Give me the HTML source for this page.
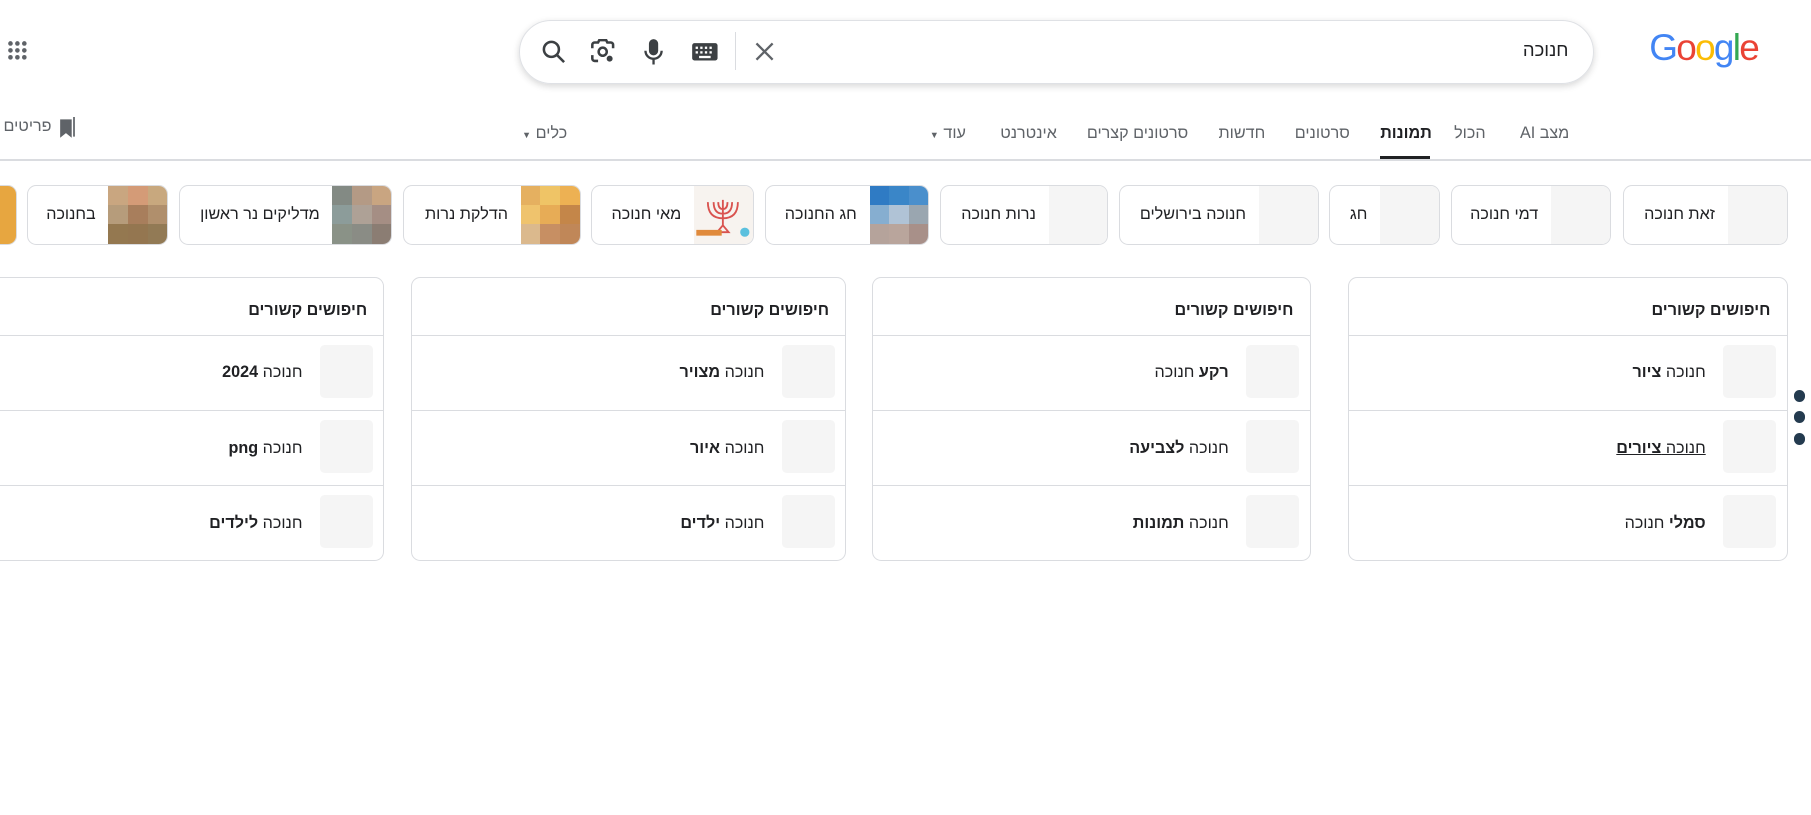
<!DOCTYPE html>
<html><head><meta charset="utf-8"><style>
html,body{margin:0;padding:0;background:#fff;overflow:hidden;width:1811px;height:815px}
#w{position:relative;width:1568px;height:706px;zoom:1.15497;font-family:"Liberation Sans","Noto Sans CJK SC",sans-serif;color:#202124}
.a{position:absolute}
.search{left:449px;top:17px;width:929px;height:54px;border:1px solid #dfe1e5;border-radius:28px;box-shadow:0 2px 6px rgba(32,33,36,.18)}
.tab{position:absolute;top:107px;font-size:14px;color:#5f6368;white-space:nowrap;direction:rtl}
.chip{position:absolute;top:160px;height:50px;border:1px solid #dadce0;border-radius:8px;overflow:hidden;background:#fff}
.chip .t{position:absolute;top:17px;font-size:14px;color:#202124;white-space:nowrap;direction:rtl}
.chip .im{position:absolute;right:0;top:0;width:51px;height:50px;background:#f5f5f5}
.card{position:absolute;top:240px;height:244px;border:1px solid #dadce0;border-radius:8px;background:#fff}
.card .h{position:absolute;right:14px;top:20px;font-size:14px;font-weight:bold;direction:rtl}
.row{position:absolute;left:0;right:0;height:64px;border-top:1px solid #dadce0}
.row .th{position:absolute;right:9px;top:8px;width:46px;height:46px;background:#f5f5f5;border-radius:4px}
.row .x{position:absolute;right:70px;top:24px;font-size:14px;direction:rtl;white-space:nowrap}
.row b{font-weight:bold}
.mos{position:absolute;right:0;top:0;width:51px;height:50px;display:grid;grid-template-columns:repeat(3,1fr);grid-template-rows:repeat(3,1fr)}
</style></head><body><div id="w">
<svg class="a" style="left:6px;top:35px" width="18" height="18" viewBox="0 0 18 18" fill="#5f6368"><circle cx="3" cy="3" r="2"/><circle cx="9" cy="3" r="2"/><circle cx="15" cy="3" r="2"/><circle cx="3" cy="9" r="2"/><circle cx="9" cy="9" r="2"/><circle cx="15" cy="9" r="2"/><circle cx="3" cy="15" r="2"/><circle cx="9" cy="15" r="2"/><circle cx="15" cy="15" r="2"/></svg>
<div class="a search"></div>
<div class="a" style="right:210px;top:34px;font-size:16px;">חנוכה</div>
<svg class="a" style="left:652px;top:35px" width="20" height="20" viewBox="0 0 20 20"><path d="M3 3L17 17M17 3L3 17" stroke="#5f6368" stroke-width="2"/></svg>
<div class="a" style="left:636px;top:28px;width:1px;height:33px;background:#dadce0"></div>
<svg class="a" style="left:598px;top:36px" width="24" height="18" viewBox="0 0 24 18"><rect x="1" y="1" width="22" height="15" rx="2" fill="#3c4043"/><g fill="#fff"><rect x="4" y="4" width="2" height="2"/><rect x="8" y="4" width="2" height="2"/><rect x="12" y="4" width="2" height="2"/><rect x="16" y="4" width="2" height="2"/><rect x="4" y="8" width="2" height="2"/><rect x="8" y="8" width="2" height="2"/><rect x="12" y="8" width="2" height="2"/><rect x="16" y="8" width="2" height="2"/><rect x="7" y="12" width="10" height="2"/></g></svg>
<svg class="a" style="left:556px;top:33px" width="20" height="24" viewBox="0 0 20 24"><rect x="6" y="1" width="8" height="14" rx="4" fill="#3c4043"/><path d="M3 11a7 7 0 0 0 14 0M10 18v5" stroke="#3c4043" stroke-width="2" fill="none"/></svg>
<svg class="a" style="left:511px;top:34px" width="22" height="22" viewBox="0 0 22 22" fill="none" stroke="#3c4043" stroke-width="2.2"><path d="M2 8V5a2 2 0 0 1 2-2h3l1-2h6l1 2h3a2 2 0 0 1 2 2v3M2 14v3a2 2 0 0 0 2 2h3"/><circle cx="11" cy="11" r="3.5"/><circle cx="17" cy="17" r="1.5" fill="#3c4043"/></svg>
<svg class="a" style="left:468px;top:34px" width="22" height="22" viewBox="0 0 22 22" fill="none" stroke="#3c4043" stroke-width="2.2"><circle cx="9" cy="9" r="6.5"/><path d="M14 14l6 6"/></svg>
<div class="a" style="left:1428px;top:23px;font-size:32px;letter-spacing:-1.5px;font-family:'Liberation Sans',sans-serif"><span style="color:#4285f4">G</span><span style="color:#ea4335">o</span><span style="color:#fbbc05">o</span><span style="color:#4285f4">g</span><span style="color:#34a853">l</span><span style="color:#ea4335">e</span></div>
<div class="tab" style="left:1316px">מצב AI</div>
<div class="tab" style="left:1259px">הכול</div>
<div class="tab" style="left:1195px;color:#202124;font-weight:bold">תמונות</div>
<div class="a" style="left:1195px;top:135px;width:43px;height:3px;background:#202124"></div>
<div class="tab" style="left:1121px">סרטונים</div>
<div class="tab" style="left:1055px">חדשות</div>
<div class="tab" style="left:941px">סרטונים קצרים</div>
<div class="tab" style="left:866px">אינטרנט</div>
<div class="tab" style="left:805px;direction:ltr"><span style="font-size:8px">▼</span> עוד</div>
<div class="tab" style="left:452px;direction:ltr"><span style="font-size:8px">▼</span> כלים</div>
<div class="tab" style="left:3px;top:101px">פריטים</div>
<svg class="a" style="left:51px;top:101px" width="15" height="19" viewBox="0 0 15 19"><path d="M1 2h10v16l-5-4-5 4z" fill="#5f6368"/><path d="M13 0v17" stroke="#5f6368" stroke-width="1.5"/></svg>
<div class="a" style="left:0;top:138px;width:1568px;height:1px;background:#dadce0"></div>
<div class="chip" style="left:1405px;width:141px"><div class="im"></div><div class="t" style="right:62px">זאת חנוכה</div></div>
<div class="chip" style="left:1256px;width:137px"><div class="im"></div><div class="t" style="right:62px">דמי חנוכה</div></div>
<div class="chip" style="left:1151px;width:94px"><div class="im"></div><div class="t" style="right:62px">חג</div></div>
<div class="chip" style="left:969px;width:171px"><div class="im"></div><div class="t" style="right:62px">חנוכה בירושלים</div></div>
<div class="chip" style="left:814px;width:144px"><div class="im"></div><div class="t" style="right:62px">נרות חנוכה</div></div>
<div class="chip" style="left:662px;width:141px"><div class="mos"><i style="background:#2f7bc4"></i><i style="background:#3a86c8"></i><i style="background:#4a8fcc"></i><i style="background:#86aed0"></i><i style="background:#b0c3d6"></i><i style="background:#9aa6b0"></i><i style="background:#b5a39b"></i><i style="background:#b9a59c"></i><i style="background:#a89089"></i></div><div class="t" style="right:62px">חג החנוכה</div></div>
<div class="chip" style="left:512px;width:139px"><div class="im" style="background:#f7f3ef"><svg width="51" height="50" viewBox="0 0 51 50"><path d="M25 12v22M12 14q0 14 13 14q13 0 13-14M17 14q0 10 8 10q8 0 8-10M21 14q0 6 4 6q4 0 4-6M20 40h10l-5-6z" stroke="#d9534f" stroke-width="1.6" fill="none"/><rect x="2" y="38" width="22" height="5" fill="#e08a3c"/><circle cx="44" cy="40" r="4" fill="#5bc0de"/></svg></div><div class="t" style="right:62px">מאי חנוכה</div></div>
<div class="chip" style="left:349px;width:152px"><div class="mos"><i style="background:#e5b060"></i><i style="background:#efc466"></i><i style="background:#edb153"></i><i style="background:#efc36d"></i><i style="background:#e7ac56"></i><i style="background:#c48649"></i><i style="background:#dbb98d"></i><i style="background:#c78f63"></i><i style="background:#c08758"></i></div><div class="t" style="right:62px">הדלקת נרות</div></div>
<div class="chip" style="left:155px;width:183px"><div class="mos"><i style="background:#838a84"></i><i style="background:#b49a85"></i><i style="background:#c9a581"></i><i style="background:#8c9c9a"></i><i style="background:#aea196"></i><i style="background:#a58e84"></i><i style="background:#8a9287"></i><i style="background:#8a8c85"></i><i style="background:#8b7d73"></i></div><div class="t" style="right:62px">מדליקים נר ראשון</div></div>
<div class="chip" style="left:23px;width:121px"><div class="mos"><i style="background:#c9a680"></i><i style="background:#d49b77"></i><i style="background:#c8a87e"></i><i style="background:#b69c7b"></i><i style="background:#a87e5c"></i><i style="background:#b08f6c"></i><i style="background:#947850"></i><i style="background:#947650"></i><i style="background:#927a55"></i></div><div class="t" style="right:62px">בחנוכה</div></div>
<div class="chip" style="left:-40px;width:53px;background:#e7a640"></div>
<div class="card" style="left:1167px;width:379px"><div class="h">חיפושים קשורים</div>
<div class="row" style="top:49px"><div class="th"></div><div class="x">חנוכה <b>ציור</b></div></div>
<div class="row" style="top:114px"><div class="th"></div><div class="x" style="text-decoration:underline">חנוכה <b>ציורים</b></div></div>
<div class="row" style="top:179px"><div class="th"></div><div class="x"><b>סמלי</b> חנוכה</div></div></div>
<div class="card" style="left:755px;width:378px"><div class="h">חיפושים קשורים</div>
<div class="row" style="top:49px"><div class="th"></div><div class="x"><b>רקע</b> חנוכה</div></div>
<div class="row" style="top:114px"><div class="th"></div><div class="x">חנוכה <b>לצביעה</b></div></div>
<div class="row" style="top:179px"><div class="th"></div><div class="x">חנוכה <b>תמונות</b></div></div></div>
<div class="card" style="left:356px;width:375px"><div class="h">חיפושים קשורים</div>
<div class="row" style="top:49px"><div class="th"></div><div class="x">חנוכה <b>מצויר</b></div></div>
<div class="row" style="top:114px"><div class="th"></div><div class="x">חנוכה <b>איור</b></div></div>
<div class="row" style="top:179px"><div class="th"></div><div class="x">חנוכה <b>ילדים</b></div></div></div>
<div class="card" style="left:-50px;width:381px"><div class="h">חיפושים קשורים</div>
<div class="row" style="top:49px"><div class="th"></div><div class="x">חנוכה <b>2024</b></div></div>
<div class="row" style="top:114px"><div class="th"></div><div class="x">חנוכה <b>png</b></div></div>
<div class="row" style="top:179px"><div class="th"></div><div class="x">חנוכה <b>לילדים</b></div></div></div>
<div class="a" style="left:1553px;top:338px;width:10px;height:10px;border-radius:50%;background:#243b4f"></div>
<div class="a" style="left:1553px;top:356px;width:10px;height:10px;border-radius:50%;background:#243b4f"></div>
<div class="a" style="left:1553px;top:375px;width:10px;height:10px;border-radius:50%;background:#243b4f"></div>
</div></body></html>
